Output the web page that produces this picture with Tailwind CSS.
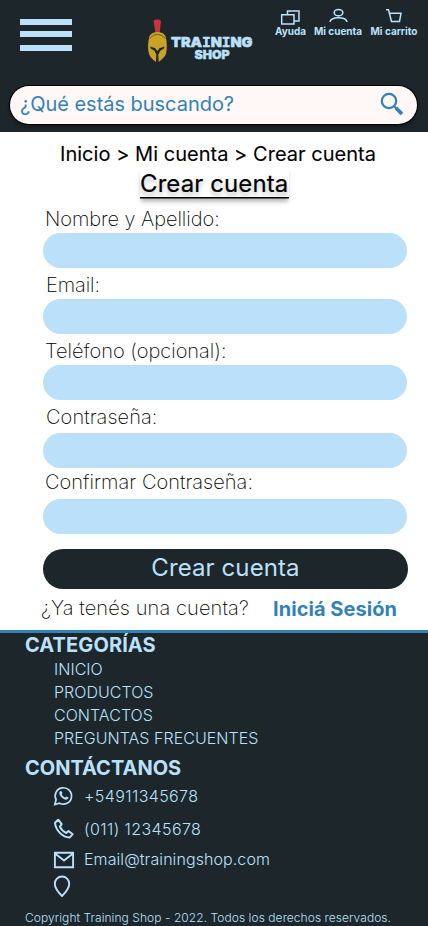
<!DOCTYPE html>
<html lang="es">
<head>
<meta charset="utf-8">
<meta name="viewport" content="width=device-width, initial-scale=1">
<title>Training Shop - Crear cuenta</title>
<script src="https://cdn.jsdelivr.net/npm/@tailwindcss/browser@4"></script>
</head>
<body class="w-[428px] h-[926px] overflow-hidden bg-white font-['Inter',sans-serif] text-black">
<header class="h-[132px] bg-[#1c262b] text-[#bbe1fa]">
  <div class="flex h-[86px] items-start">
    <button class="ml-5 mt-[19px] block w-[52px]" aria-label="Menú">
      <span class="block h-[6px] bg-[#bbe1fa]"></span>
      <span class="mt-[6px] block h-[6px] bg-[#bbe1fa]"></span>
      <span class="mt-[8px] block h-[6px] bg-[#bbe1fa]"></span>
    </button>
    <svg class="ml-[68px] mt-[10px] block shrink-0" width="120" height="60" viewBox="0 0 120 60">
      <path d="M13.500 10.500l2.500-1h3l2 1.500-1.200 11h-4.500z" fill="#c93438"/>
      <path d="M9 28C10 20 25 20 26 28C27 33 27.200 39 26 44C24 48 21 50 18.700 52L18.300 44.500L20.500 40.500L24 38.500L24.500 36.500L19.500 38.200L17.300 41L15.200 38.200L10.200 36.500L10.700 38.500L14.200 40.500L16.300 44.500L16 52C13.500 50 10.500 48 9 44C7.500 39 8 33 9 28Z" fill="#c9a227"/>
      <path d="M9.500 28.500Q17.500 20 25.500 28.500" fill="none" stroke="#5a4e20" stroke-width=".8"/>
      <text x="31" y="36.800" textLength="81.500" lengthAdjust="spacingAndGlyphs" font-family="Inter, sans-serif" font-weight="900" font-size="13.800" fill="#bbe1fa" stroke="#bbe1fa" stroke-width=".5">TRA<tspan font-family="'DejaVu Sans Mono', monospace">I</tspan>N<tspan font-family="'DejaVu Sans Mono', monospace">I</tspan>NG</text>
      <text x="54.500" y="48.500" textLength="35" lengthAdjust="spacingAndGlyphs" font-family="Inter, sans-serif" font-weight="900" font-size="11.500" fill="#bbe1fa" stroke="#bbe1fa" stroke-width=".4">SHOP</text>
    </svg>
    <nav class="ml-[14px] flex pt-[7px] text-[10px] font-bold leading-[12px] whitespace-nowrap">
      <a class="flex w-[33px] flex-col items-center"><svg width="22" height="18" viewBox="0 0 22 18" fill="none" stroke="#bbe1fa" stroke-width="1.500"><path d="M7.500 7.500V4h11.500v10h-5.500M1.700 7.800h12.300v9.200H1.700z"/></svg>Ayuda</a>
      <a class="ml-[6px] flex w-[50px] flex-col items-center"><svg width="22" height="18" viewBox="0 0 22 18" fill="none" stroke="#bbe1fa" stroke-width="1.600"><ellipse cx="11.500" cy="5.700" rx="4.300" ry="3.200"/><path d="M3 15c.8-5.700 16.200-5.700 17 0"/></svg>Mi cuenta</a>
      <a class="ml-[6px] flex w-[50px] flex-col items-center"><svg width="22" height="18" viewBox="0 0 22 18" fill="none" stroke="#bbe1fa" stroke-width="1.500"><path d="M3 2.800h2.500l3 11.700h8l1.500-8.200H6.500"/></svg><span>Mi carrito</span></a>
    </nav>
  </div>
  <div class="mx-[10px] flex h-[38px] w-[407px] items-center rounded-full bg-[#fff8f7] pl-[10px] pr-[12px] text-[#3282b8] shadow-[0_0_0_1px_#000,0_3px_4px_rgba(0,0,0,.4)]">
    <span class="text-[20px] leading-[36px] -mt-[2px] grow tracking-[-0.03px]">¿Qué estás buscando?</span>
    <svg width="26" height="26" viewBox="0 0 26 26" fill="none" stroke="#3282b8"><circle cx="10" cy="9" r="7.200" stroke-width="2.200"/><path d="M15 14l2.500 2.500" stroke-width="2.200"/><path d="M17 16l6 6" stroke-width="3.800"/></svg>
  </div>
</header>
<main class="h-[498px]">
  <p class="ml-[60px] pt-[10px] text-[20px] leading-[24px] tracking-[0.03px] whitespace-nowrap [-webkit-text-stroke:0.1px_#000]">Inicio &gt; Mi cuenta &gt; Crear cuenta</p>
  <h1 class="ml-[140px] h-[33px] w-[149px] text-[24px] leading-[36px] tracking-[0.1px] whitespace-nowrap [-webkit-text-stroke:0.2px_#000] [text-shadow:0_4px_4px_rgba(0,0,0,.25)]"><span class="block h-[32px] w-[149px] border-b border-black shadow-[0_0.5px_0_#000,0_5px_4px_-1px_rgba(0,0,0,.25)]">Crear cuenta</span></h1>
  <form class="ml-[43px] w-[365px] text-[20px] font-extralight leading-[30px] whitespace-nowrap">
    <label class="block h-[34px] pt-[5px] pl-[2px] tracking-[-0.05px]">Nombre y Apellido:</label>
    <div class="h-[35px] w-[364px] rounded-full bg-[#bbe1fa]"></div>
    <label class="block h-[31px] pt-[2px] pl-[3px] tracking-[-0.1px]">Email:</label>
    <div class="h-[35px] w-[364px] rounded-full bg-[#bbe1fa]"></div>
    <label class="block h-[31px] pt-[2px] pl-[2px]">Teléfono (opcional):</label>
    <div class="h-[35px] w-[364px] rounded-full bg-[#bbe1fa]"></div>
    <label class="block h-[33px] pt-[2px] pl-[3px] tracking-[0.08px]">Contraseña:</label>
    <div class="h-[35px] w-[364px] rounded-full bg-[#bbe1fa]"></div>
    <label class="block h-[31px] pl-[2px] leading-[28px] tracking-[0.05px]">Confirmar Contraseña:</label>
    <div class="h-[35px] w-[364px] rounded-full bg-[#bbe1fa]"></div>
    <button type="button" class="mt-[15px] block h-[40px] w-[365px] rounded-full bg-[#1c262b] pb-[2px] text-[24px] font-normal leading-[38px] tracking-[0.1px] text-[#bbe1fa]">Crear cuenta</button>
  </form>
  <div class="ml-[41px] flex pt-[4px] text-[20px] leading-[30px] whitespace-nowrap">
    <span class="w-[232px] font-extralight tracking-[0.12px]">¿Ya tenés una cuenta?</span>
    <a class="pt-[1px] font-bold tracking-[0.05px] text-[#3282b8]">Iniciá Sesión</a>
  </div>
</main>
<footer class="h-[296px] border-t-[3px] border-[#3282b8] bg-[#1c262b] pl-[25px] text-[16px] font-light text-[#bbe1fa] whitespace-nowrap">
  <h2 class="text-[20px] font-bold leading-[25px] tracking-[0.1px]">CATEGORÍAS</h2>
  <ul class="ml-[29px] leading-[23px] tracking-[0.03px]">
    <li>INICIO</li><li>PRODUCTOS</li><li>CONTACTOS</li><li>PREGUNTAS FRECUENTES</li>
  </ul>
  <h2 class="pt-[6px] text-[20px] font-bold leading-[24px]">CONTÁCTANOS</h2>
  <ul class="ml-[27px]">
    <li class="flex h-[32px] items-center tracking-[0.4px]"><svg class="mr-[8px]" width="24" height="24" viewBox="0 0 24 24" fill="none" stroke="#bbe1fa" stroke-width="1.700"><path d="M2.800 20.500l1.300-4.700A8.200 8.200 0 1 1 7.500 19.200z"/><path d="M8.300 7.300c1-.9 1.500.1 2 1.500.2.600-.7 1.100-.5 1.600.8 1.500 1.800 2.400 3.300 3 .6.200 1-.9 1.500-.8 1.500.6 2.200 1 1.600 2-1.500 2.100-4.500.7-6.500-1.200-2-1.900-3.300-4.600-1.400-6.100z" fill="#bbe1fa" stroke="none"/></svg>+54911345678</li>
    <li class="flex h-[33px] items-center tracking-[0.4px]"><svg class="mr-[8px]" width="24" height="24" viewBox="0 0 24 24" fill="none" stroke="#bbe1fa" stroke-width="2" stroke-linejoin="round"><path d="M3 5.800L6.200 2.700l3.500 4.500-1.800 2.500c1.300 3 3.300 5 6.300 6.300l2.300-2 4.200 3.200-2.900 3.200C10.500 20.500 3.500 13 3 5.800z"/></svg>(011) 12345678</li>
    <li class="flex h-[29px] items-center"><svg class="mr-[8px]" width="24" height="24" viewBox="0 0 24 24" fill="none" stroke="#bbe1fa" stroke-width="1.900"><path d="M2.900 4.800h18.200v14.500H2.900zM3 5.500l9 7 9-7"/></svg><span class="-mt-px tracking-[0.08px]">Email@trainingshop.com</span></li>
    <li class="flex h-[24px] items-center"><svg width="24" height="24" viewBox="0 0 24 24" fill="none" stroke="#bbe1fa" stroke-width="1.900"><path d="M10 22C7 19 2.800 14.500 2.800 9.700a7.200 7.200 0 0 1 14.400 0c0 4.800-4.200 9.300-7.200 12.300z"/></svg></li>
  </ul>
  <p class="pt-[10px] text-[12px] leading-[20px] tracking-[0.06px]">Copyright Training Shop - 2022. Todos los derechos reservados.</p>
</footer>
</body>
</html>
